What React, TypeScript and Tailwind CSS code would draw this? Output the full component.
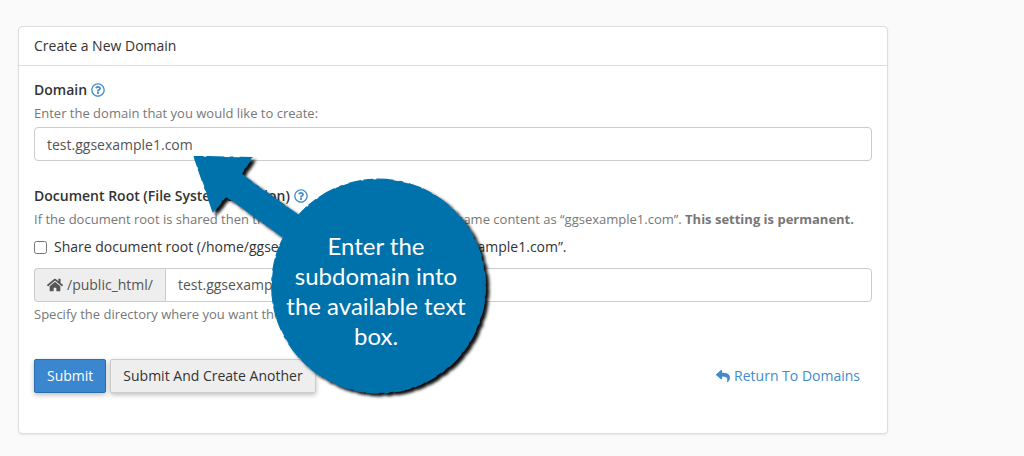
import React, { useState } from 'react';
import { FaHome, FaRegQuestionCircle, FaReply } from 'react-icons/fa';

function HelpButton({ label }: { label: string }) {
  return (
    <button type="button" aria-label={label} className="text-[#428bca]">
      <FaRegQuestionCircle className="size-3.5" />
    </button>
  );
}

function Callout() {
  return (
    <div className="pointer-events-none absolute left-[160px] top-[113px] h-[260px] w-[320px]">
      <svg viewBox="0 0 320 260" className="h-full w-full overflow-visible" aria-hidden="true">
        <defs>
          <filter id="callout-shadow" x="-10%" y="-10%" width="125%" height="125%">
            <feDropShadow dx="3.5" dy="3" stdDeviation="1.8" floodColor="#000" floodOpacity="0.95" />
          </filter>
        </defs>
        {/* the dashed outline gives the hand-cut edge */}
        <g
          fill="#0072ab"
          stroke="#0072ab"
          strokeWidth="1.2"
          strokeDasharray="9 4 17 6 3 7 12 3"
          strokeLinecap="round"
          strokeLinejoin="round"
          filter="url(#callout-shadow)"
        >
          <path d="M15 16.5 L73 17.5 L62 34 L119 75 L135 115 L104 97 L47 56 L34 72 Z" />
          <circle cx="199.5" cy="146" r="106.8" />
        </g>
      </svg>
      <p className="absolute left-[97px] top-[91px] w-[200px] px-2 text-center font-['Lato','Open_Sans',sans-serif] text-2xl leading-[30px] text-white">
        Enter the subdomain into the available text box.
      </p>
    </div>
  );
}

export default function App() {
  const [domain, setDomain] = useState('test.ggsexample1.com');
  const [docRoot, setDocRoot] = useState('test.ggsexample1.com');
  const [shared, setShared] = useState(false);

  return (
    <div className="min-h-screen bg-[#fafafa] px-[18px] pt-[26px] pb-5 font-['Open_Sans','Noto_Sans',sans-serif] text-sm text-[#333]">
      <div className="relative max-w-[870px] rounded border border-[#ddd] bg-white shadow-[0_1px_2px_rgba(0,0,0,0.08)]">
        <h1 className="border-b border-[#ddd] px-[15px] py-[9px] leading-5">Create a New Domain</h1>

        <form className="px-[15px] pt-3.5 pb-10" onSubmit={(e) => e.preventDefault()}>
          <div className="flex items-center gap-1 leading-5">
            <label htmlFor="domain" className="font-semibold">Domain</label>
            <HelpButton label="Domain help" />
          </div>
          <p className="mt-[3px] mb-1 text-[13px] leading-5 text-[#777]">Enter the domain that you would like to create:</p>
          <input
            id="domain"
            type="text"
            value={domain}
            onChange={(e) => setDomain(e.target.value)}
            className="block h-[34px] w-full rounded border border-[#ccc] bg-white px-3 text-[#555]"
          />

          <div className="mt-[25px] flex items-center gap-1 leading-5">
            <label htmlFor="docroot" className="font-semibold">Document Root (File System Location)</label>
            <HelpButton label="Document root help" />
          </div>
          <p className="mt-[3px] mb-1 text-[13px] leading-5 text-[#777]">
            If the document root is shared then the created domain will serve the same content as “ggsexample1.com”. <strong>This setting is permanent.</strong>
          </p>
          <label className="mt-2 flex items-center gap-[7px] leading-5">
            <input type="checkbox" checked={shared} onChange={(e) => setShared(e.target.checked)} className="size-[13px]" />
            Share document root (/home/ggsexamp/public_html) with “ggsexample1.com”.
          </label>

          <div className="mt-[11px] flex h-[34px]">
            <span className="flex items-center gap-1 rounded-l border border-r-0 border-[#ccc] bg-[#eee] px-3 text-[#555]">
              <FaHome className="size-4" />
              /public_html/
            </span>
            <input
              id="docroot"
              type="text"
              value={docRoot}
              onChange={(e) => setDocRoot(e.target.value)}
              className="min-w-0 flex-1 rounded-r border border-[#ccc] bg-white px-3 text-[#555]"
            />
          </div>
          <p className="mt-0.5 text-[13px] leading-5 text-[#777]">Specify the directory where you want the files for this domain to exist.</p>

          <div className="mt-[35px] flex items-center gap-1">
            <button type="submit" className="h-[34px] rounded-xs border border-[#2a6db0] bg-[#3a87cf] px-3 text-white shadow-[0_2px_5px_rgba(0,0,0,0.26)]">
              Submit
            </button>
            <button type="button" className="h-[34px] rounded-xs border border-[#ccc] bg-[#eee] px-3 shadow-[0_2px_5px_rgba(0,0,0,0.26)]">
              Submit And Create Another
            </button>
            <a href="#domains" className="mr-3 ml-auto flex items-center gap-1 text-[#428bca]">
              <FaReply className="size-3.5" />
              Return To Domains
            </a>
          </div>
        </form>

        <Callout />
      </div>
    </div>
  );
}
